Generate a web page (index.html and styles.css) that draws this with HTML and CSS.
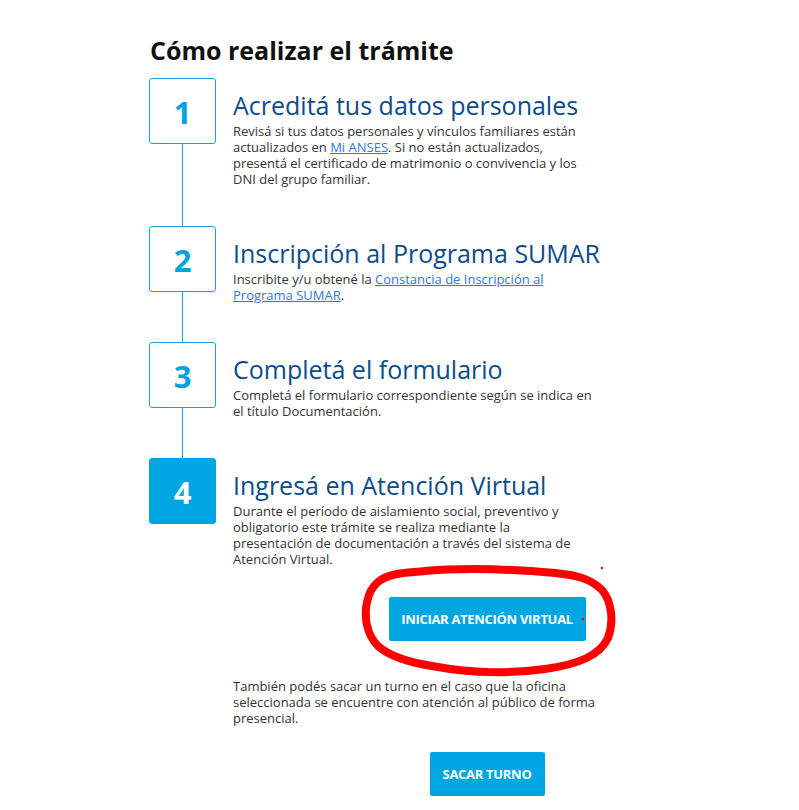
FILE: index.html
```
<!DOCTYPE html>
<html lang="es">
<head>
<meta charset="utf-8">
<title>Cómo realizar el trámite</title>
<link rel="stylesheet" href="styles.css">
</head>
<body>
<main class="page">
  <h2 class="heading">Cómo realizar el trámite</h2>
  <ol class="steps">
    <li class="step">
      <div class="marker"><div class="box">1</div><div class="line"></div></div>
      <div class="content">
        <h3 class="title">Acreditá tus datos personales</h3>
        <p class="desc">Revisá si tus datos personales y vínculos familiares están actualizados en <a href="#">Mi ANSES</a>. Si no están actualizados, presentá el certificado de matrimonio o convivencia y los DNI del grupo familiar.</p>
      </div>
    </li>
    <li class="step">
      <div class="marker"><div class="box">2</div><div class="line"></div></div>
      <div class="content">
        <h3 class="title">Inscripción al Programa SUMAR</h3>
        <p class="desc">Inscribite y/u obtené la <a href="#">Constancia de Inscripción al Programa SUMAR</a>.</p>
      </div>
    </li>
    <li class="step">
      <div class="marker"><div class="box">3</div><div class="line"></div></div>
      <div class="content">
        <h3 class="title">Completá el formulario</h3>
        <p class="desc">Completá el formulario correspondiente según se indica en el título Documentación.</p>
      </div>
    </li>
    <li class="step last">
      <div class="marker"><div class="box filled">4</div></div>
      <div class="content">
        <h3 class="title">Ingresá en Atención Virtual</h3>
        <p class="desc narrow">Durante el período de aislamiento social, preventivo y obligatorio este trámite se realiza mediante la presentación de documentación a través del sistema de Atención Virtual.</p>
        <div class="actions first"><a class="btn btn-virtual" href="#">INICIAR ATENCIÓN VIRTUAL</a></div>
        <p class="desc note">También podés sacar un turno en el caso que la oficina seleccionada se encuentre con atención al público de forma presencial.</p>
        <div class="actions second"><a class="btn btn-turno" href="#">SACAR TURNO</a></div>
      </div>
    </li>
  </ol>
</main>
<svg class="annotation" width="280" height="125" viewBox="0 0 280 125" aria-hidden="true">
  <path d="M28 22 C40 12 60 13 75 11 C110 8 160 9 205 13 C225 15 240 18 252 30 C262 42 264 62 258 78 C250 95 230 104 195 109 C160 114 120 113 88 107 C60 103 40 97 28 86 C16 74 14 56 17 42 C19 32 22 27 28 22 Z" fill="none" stroke="#f00" stroke-width="8" stroke-linejoin="round"/>
  <circle cx="252" cy="8" r="1.2" fill="#f00"/>
  <circle cx="233" cy="59" r="1.2" fill="#f00"/>
</svg>
</body>
</html>
```
FILE: styles.css
```
html, body {
  margin: 0;
  padding: 0;
  background: #ffffff;
}
body {
  font-family: "Open Sans", "Liberation Sans", sans-serif;
  color: #333333;
  position: relative;
}
.page {
  padding: 35px 0 0 149px;
}
.heading {
  margin: 0 0 13px 1px;
  font-size: 25px;
  line-height: 30px;
  font-weight: 700;
  color: #111111;
}
.steps {
  list-style: none;
  margin: 0;
  padding: 0;
}
.step {
  display: flex;
}
.marker {
  width: 67px;
  flex: none;
  display: flex;
  flex-direction: column;
}
.box {
  box-sizing: border-box;
  width: 67px;
  height: 66px;
  border: 1px solid #1da1dc;
  border-radius: 3px;
  display: flex;
  align-items: center;
  justify-content: center;
  font-size: 31px;
  font-weight: 700;
  color: #00a2e0;
  padding-top: 2px;
}
.box.filled {
  background: #00a6e2;
  border-color: #00a6e2;
  color: #ffffff;
}
.line {
  flex: 1;
  width: 1px;
  margin-left: 33px;
  background: #1da1dc;
}
.content {
  width: 508px;
  margin-left: 17px;
  padding-bottom: 39px;
}
.title {
  margin: 12px 0 0 0;
  font-size: 25px;
  line-height: 30px;
  font-weight: 400;
  color: #0b4c8c;
  white-space: nowrap;
}
.desc {
  margin: 3px 0 0 0;
  width: 362px;
  font-size: 13px;
  line-height: 16px;
  color: #333333;
}
.desc.narrow {
  width: 350px;
}
.desc a {
  color: #2a7ae2;
  text-decoration: underline;
}
.actions {
  display: flex;
  justify-content: center;
}
.actions.first {
  margin-top: 30px;
}
.note {
  margin-top: 37px;
}
.actions.second {
  margin-top: 26px;
}
.btn {
  box-sizing: border-box;
  height: 44px;
  display: flex;
  align-items: center;
  justify-content: center;
  background: #00a6e2;
  color: #ffffff;
  font-size: 13px;
  letter-spacing: -0.3px;
  font-weight: 700;
  text-decoration: none;
  border-radius: 2px;
}
.btn-virtual {
  width: 197px;
}
.btn-turno {
  width: 115px;
}
.annotation {
  position: absolute;
  left: 350px;
  top: 560px;
  pointer-events: none;
}
```
